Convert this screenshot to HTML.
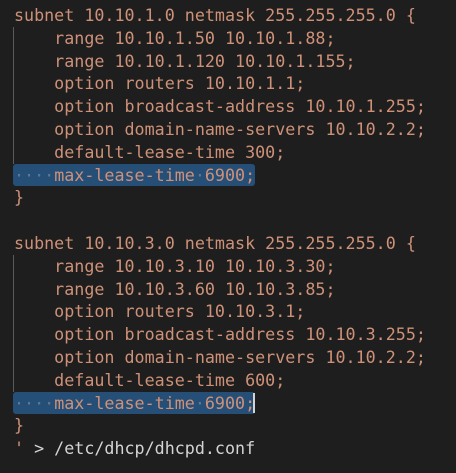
<!DOCTYPE html><html><head><style>
html,body{margin:0;background:#1e1e1e;width:456px;height:473px;overflow:hidden}
pre{margin:0;position:absolute;left:14px;top:4px;font-family:"DejaVu Sans Mono",monospace;font-size:16.7px;line-height:22.8px;color:#ce9178}
.g{position:absolute;left:13px;width:1px;background:#5a5a5a}
.s{position:absolute;left:13px;height:22px;background:#264f78;border-radius:3px}
.d{color:#5b7896}
.w{color:#d4d4d4}
.c{position:absolute;width:2px;height:20px;background:#d4d4d4}
</style></head><body>
<div class="g" style="top:27px;height:137px"></div>
<div class="g" style="top:255px;height:137px"></div>
<div class="s" style="top:164px;width:242px"></div>
<div class="s" style="top:392px;width:242px"></div>
<div class="c" style="left:253px;top:393px"></div>
<pre>subnet 10.10.1.0 netmask 255.255.255.0 {
    range 10.10.1.50 10.10.1.88;
    range 10.10.1.120 10.10.1.155;
    option routers 10.10.1.1;
    option broadcast-address 10.10.1.255;
    option domain-name-servers 10.10.2.2;
    default-lease-time 300;
<span class="d">····</span>max-lease-time<span class="d">·</span>6900;
}

subnet 10.10.3.0 netmask 255.255.255.0 {
    range 10.10.3.10 10.10.3.30;
    range 10.10.3.60 10.10.3.85;
    option routers 10.10.3.1;
    option broadcast-address 10.10.3.255;
    option domain-name-servers 10.10.2.2;
    default-lease-time 600;
<span class="d">····</span>max-lease-time<span class="d">·</span>6900;
}
'<span class="w"> &gt; /etc/dhcp/dhcpd.conf</span></pre>
</body></html>
